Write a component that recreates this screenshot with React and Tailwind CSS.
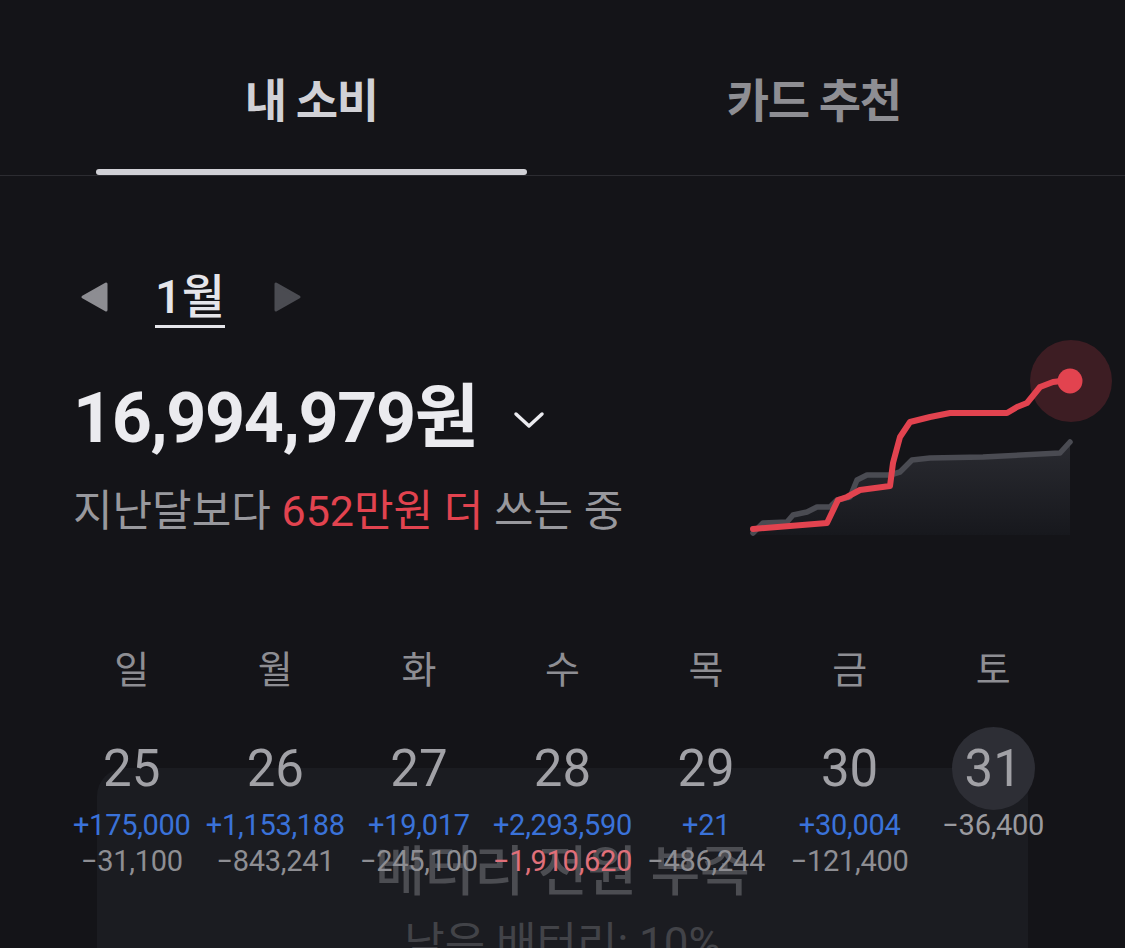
import React from 'react';

const FONT = { fontFamily: 'Roboto, "Noto Sans CJK KR", sans-serif' };

const days = [
  { label: '일', day: 25, income: '+175,000', expense: '−31,100' },
  { label: '월', day: 26, income: '+1,153,188', expense: '−843,241' },
  { label: '화', day: 27, income: '+19,017', expense: '−245,100' },
  { label: '수', day: 28, income: '+2,293,590', expense: '−1,910,620', over: true },
  { label: '목', day: 29, income: '+21', expense: '−486,244' },
  { label: '금', day: 30, income: '+30,004', expense: '−121,400' },
  { label: '토', day: 31, expense: '−36,400', today: true },
];

const thisMonth =
  '13,194 87,188 98,165 107,162 120,155 150,151 153,128 160,102 170,87 190,82 210,78 267,78 277,72 287,68 300,52 313,47 330,45';
const lastMonth =
  '13,198 23,188 47,187 53,180 67,177 77,172 90,172 97,165 110,162 117,145 127,140 150,140 160,137 172,125 190,123 243,122 320,118 330,107';

const Triangle = ({ dir, color }) => (
  <svg width="32" height="32" viewBox="0 0 32 32">
    <path
      d={dir === 'left' ? 'M4 16 L27 3 L27 29 Z' : 'M28 16 L5 3 L5 29 Z'}
      fill={color}
      stroke={color}
      strokeWidth="3"
      strokeLinejoin="round"
    />
  </svg>
);

const SpendChart = () => (
  <svg width="380" height="205" viewBox="0 0 380 205" className="ml-auto mr-[5px] mt-[159px] shrink-0">
    <defs>
      <linearGradient id="lastFill" x1="0" y1="0" x2="0" y2="1">
        <stop offset="0%" stopColor="#2a2b31" />
        <stop offset="100%" stopColor="#17181d" />
      </linearGradient>
    </defs>
    <polygon points={`${lastMonth} 330,200 13,200`} fill="url(#lastFill)" />
    <polyline points={lastMonth} fill="none" stroke="#4a4b52" strokeWidth="5.5" strokeLinejoin="round" strokeLinecap="round" />
    <circle cx="331" cy="46" r="41" fill="#e2434f" opacity="0.2" />
    <polyline points={thisMonth} fill="none" stroke="#e2434f" strokeWidth="6" strokeLinejoin="round" strokeLinecap="round" />
    <circle cx="330" cy="46" r="12.5" fill="#e2434f" />
  </svg>
);

export default function App() {
  return (
    <div className="relative w-[1125px] h-[948px] overflow-hidden bg-[#141418]" style={FONT}>
      {/* 배터리 알림 (내용 뒤로 흐리게) */}
      <div className="absolute left-[97px] top-[768px] w-[931px] h-[320px] rounded-[28px] bg-[#1b1c21] flex flex-col items-center pt-[78px]">
        <div className="text-[54px] leading-none font-medium text-[#4c4d52]">배터리 전원 부족</div>
        <div className="mt-[22px] text-[44px] leading-none text-[#424348]">남은 배터리: 10%</div>
      </div>

      <div className="relative">
        {/* 탭 */}
        <header className="h-[176px] border-b border-[#2c2c31] px-[60px] flex">
          <div className="flex-1 flex flex-col items-center">
            <div className="mt-[78px] text-[46px] leading-none font-semibold tracking-[-0.03em] text-[#d1d1d6]">내 소비</div>
            <div className="mt-auto self-stretch mx-[36px] h-[6px] rounded-full bg-[#d1d1d6]" />
          </div>
          <div className="flex-1 flex flex-col items-center">
            <div className="mt-[78px] text-[46px] leading-none font-semibold tracking-[-0.03em] text-[#8e8e93]">카드 추천</div>
          </div>
        </header>

        {/* 월 요약 + 그래프 */}
        <section className="flex">
          <div className="pl-[73px] flex flex-col">
            <div className="mt-[96px] ml-[6px] flex items-center h-[56px]">
              <div className="mb-[6px]"><Triangle dir="left" color="#8d8d92" /></div>
              <span className="ml-[44px] text-[47px] leading-none font-medium text-[#e5e5ea] border-b-[3px] border-[#e5e5ea] pb-[5px]">1월</span>
              <div className="ml-[46px] mb-[6px]"><Triangle dir="right" color="#4b4c52" /></div>
            </div>
            <div className="mt-[55px] flex items-center">
              <span className="text-[70px] leading-none font-bold tracking-[-0.02em] text-[#ebebef]">16,994,979원</span>
              <svg width="34" height="22" viewBox="0 0 34 22" className="ml-[34px] mt-[4px]">
                <polyline points="4,5 17,17 30,5" fill="none" stroke="#ebebef" strokeWidth="3.5" strokeLinecap="round" strokeLinejoin="round" />
              </svg>
            </div>
            <div className="mt-[37px] text-[43px] leading-none text-[#98989d] whitespace-nowrap">
              지난달보다 <span className="text-[#e2434f]">652만원 더</span> 쓰는 중
            </div>
          </div>
          <SpendChart />
        </section>

        {/* 주간 달력 */}
        <section className="mt-[111px] px-[60px] grid grid-cols-7">
          {days.map((d) => (
            <div key={d.day} className="flex flex-col items-center">
              <div className="text-[38px] leading-none text-[#8e8e93]">{d.label}</div>
              <div
                className={
                  'mt-[38px] w-[83px] h-[83px] rounded-full flex items-center justify-center text-[51px] leading-none text-[#a1a1a6] ' +
                  (d.today ? 'bg-[#2d2e35]' : '')
                }
              >
                {d.day}
              </div>
              <div className="mt-[-3px] h-[36px] leading-[36px] text-[29px] tracking-[-0.01em] whitespace-nowrap">
                {d.income ? (
                  <span className="text-[#3a72d9]">{d.income}</span>
                ) : (
                  <span className="text-[#9a9a9f]">{d.expense}</span>
                )}
              </div>
              {d.income && (
                <div
                  className={
                    'h-[36px] leading-[36px] text-[29px] tracking-[-0.01em] whitespace-nowrap ' +
                    (d.over ? 'text-[#e0707a]' : 'text-[#8e8e93]')
                  }
                >
                  {d.expense}
                </div>
              )}
            </div>
          ))}
        </section>
      </div>
    </div>
  );
}
